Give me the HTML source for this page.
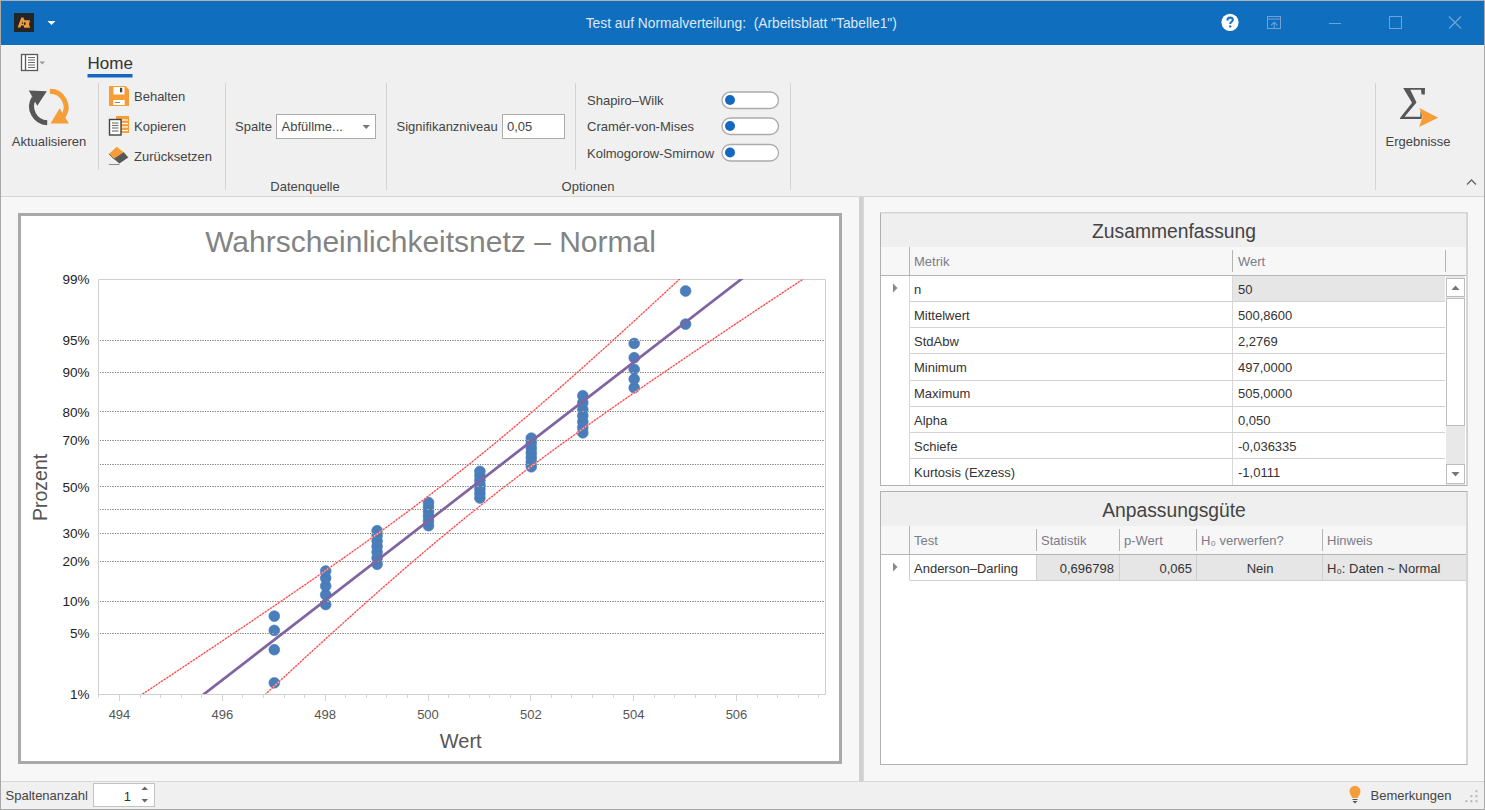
<!DOCTYPE html>
<html><head><meta charset="utf-8"><style>
html,body{margin:0;padding:0;width:1485px;height:810px;overflow:hidden;background:#f7f7f7}
svg{display:block;font-family:"Liberation Sans", sans-serif}
</style></head><body>
<svg width="1485" height="810" viewBox="0 0 1485 810">
<rect x="0" y="0" width="1485" height="810" fill="#f7f7f7" stroke="none" stroke-width="1" />
<rect x="1" y="1" width="1483" height="44" fill="#106ebe" stroke="none" stroke-width="1" />
<rect x="1" y="45" width="1483" height="151" fill="#f0f0f0" stroke="none" stroke-width="1" />
<line x1="1" y1="196.5" x2="1484" y2="196.5" stroke="#d6d6d6" stroke-width="1" />
<line x1="1" y1="781.5" x2="1484" y2="781.5" stroke="#d6d6d6" stroke-width="1" />
<rect x="1" y="782" width="1483" height="27" fill="#f0f0f0" stroke="none" stroke-width="1" />
<line x1="0.5" y1="0" x2="0.5" y2="810" stroke="#a8a8a8" stroke-width="1" />
<line x1="1484.5" y1="0" x2="1484.5" y2="810" stroke="#a8a8a8" stroke-width="1" />
<line x1="0" y1="0.5" x2="1485" y2="0.5" stroke="#b0b0b0" stroke-width="1" />
<line x1="0" y1="809.5" x2="1485" y2="809.5" stroke="#a8a8a8" stroke-width="1" />
<rect x="14" y="13" width="20" height="19" fill="#252525" stroke="none" stroke-width="1" />
<path d="M17.6 27.6 L21.3 17.6 L23.4 17.6 L24.6 20.2 L30 20.2 L29 24 L30 27.8 L24.2 27.8 L23.6 25.6 L21.2 25.6 L20.4 27.6 Z" fill="#f09a38"/>
<path d="M21.8 23.8 L23.2 23.8 L22.6 21.2 Z" fill="#2a2520"/>
<ellipse cx="24.8" cy="23.6" rx="0.9" ry="1.6" fill="#2a2520"/>
<path d="M47.5 21 L55.5 21 L51.5 25 Z" fill="#ffffff"/>
<text x="741.3" y="27.8" font-size="13.8" fill="#dce8f5" text-anchor="middle" font-weight="normal" >Test auf Normalverteilung:&#160;&#160;(Arbeitsblatt "Tabelle1")</text>
<circle cx="1230" cy="22.3" r="8.6" fill="#ffffff"/>
<path d="M1227.4 20.4 C1227.4 18.5 1228.6 17.6 1230.1 17.6 C1231.7 17.6 1232.8 18.6 1232.8 19.9 C1232.8 21.7 1230.2 21.9 1230.2 24" stroke="#1a72c0" stroke-width="2.1" fill="none"/>
<circle cx="1230.2" cy="26.4" r="1.2" fill="#1a72c0"/>
<rect x="1267.5" y="16.5" width="13" height="12" fill="none" stroke="#6fa3d6" stroke-width="1" />
<line x1="1267.5" y1="19" x2="1280.5" y2="19" stroke="#6fa3d6" stroke-width="1" />
<path d="M1274.2 28 L1274.2 22.2 M1271 25.3 L1274.2 22.2 L1277.4 25.3" stroke="#6fa3d6" stroke-width="1.1" fill="none"/>
<line x1="1329" y1="23.5" x2="1341" y2="23.5" stroke="#6fa3d6" stroke-width="1" />
<rect x="1389.5" y="16.5" width="12" height="12" fill="none" stroke="#6fa3d6" stroke-width="1" />
<path d="M1449 16.5 L1461 28.5 M1461 16.5 L1449 28.5" stroke="#6fa3d6" stroke-width="1.2"/>
<rect x="21.5" y="54.5" width="16" height="16" fill="#ffffff" stroke="#595959" stroke-width="1.3" />
<line x1="25.5" y1="55" x2="25.5" y2="70" stroke="#595959" stroke-width="1.3" />
<line x1="28" y1="57.5" x2="35" y2="57.5" stroke="#6a6a6a" stroke-width="1" />
<line x1="28" y1="60" x2="35" y2="60" stroke="#6a6a6a" stroke-width="1" />
<line x1="28" y1="62.5" x2="35" y2="62.5" stroke="#6a6a6a" stroke-width="1" />
<line x1="28" y1="65" x2="35" y2="65" stroke="#6a6a6a" stroke-width="1" />
<line x1="28" y1="67.5" x2="35" y2="67.5" stroke="#6a6a6a" stroke-width="1" />
<path d="M39.5 61.5 L45 61.5 L42.25 64.5 Z" fill="#999"/>
<text x="87.5" y="68.6" font-size="17" fill="#333" text-anchor="start" font-weight="normal" >Home</text>
<rect x="87.5" y="74" width="45" height="3.5" fill="#1467c0" stroke="none" stroke-width="1" />
<path d="M47.2 122.8 A16.3 16.3 0 0 1 34 98" stroke="#575757" stroke-width="5" fill="none"/>
<path d="M28.8 90.5 L46.8 91.2 L37.3 105.8 Z" fill="#575757"/>
<path d="M49.9 91.3 A16 16 0 0 1 63.1 116.5" stroke="#f59d36" stroke-width="5" fill="none"/>
<path d="M50.5 123.4 L68.9 123.4 L59.7 108.2 Z" fill="#f59d36"/>
<text x="49.0" y="146.0" font-size="13" fill="#444" text-anchor="middle" font-weight="normal" >Aktualisieren</text>
<line x1="98.5" y1="83" x2="98.5" y2="170" stroke="#d4d4d4" stroke-width="1" />
<path d="M109 86 L125.5 86 L129 89.5 L129 106 L109 106 Z" fill="#f59d36"/>
<rect x="113.5" y="87" width="11" height="7.5" fill="#ffffff" stroke="none" stroke-width="1" />
<rect x="120" y="87.8" width="2.2" height="4.5" fill="#444" stroke="none" stroke-width="1" />
<rect x="113.3" y="100" width="11.4" height="5" fill="#ffffff" stroke="none" stroke-width="1" />
<line x1="115" y1="102.5" x2="120" y2="102.5" stroke="#888" stroke-width="1" />
<text x="134.0" y="101.0" font-size="13" fill="#444" text-anchor="start" font-weight="normal" >Behalten</text>
<rect x="116" y="116" width="13" height="17" fill="#f59d36" stroke="none" stroke-width="1" />
<line x1="122" y1="120" x2="128" y2="120" stroke="#fff" stroke-width="1.2" />
<line x1="122" y1="123.5" x2="128" y2="123.5" stroke="#fff" stroke-width="1.2" />
<line x1="122" y1="127" x2="128" y2="127" stroke="#fff" stroke-width="1.2" />
<line x1="122" y1="130.5" x2="128" y2="130.5" stroke="#fff" stroke-width="1.2" />
<rect x="109.5" y="119.5" width="11.5" height="15.5" fill="#ffffff" stroke="#444" stroke-width="1.4" />
<line x1="112" y1="123" x2="118.5" y2="123" stroke="#777" stroke-width="1.2" />
<line x1="112" y1="125.5" x2="118.5" y2="125.5" stroke="#777" stroke-width="1.2" />
<line x1="112" y1="128" x2="118.5" y2="128" stroke="#777" stroke-width="1.2" />
<line x1="112" y1="131" x2="118.5" y2="131" stroke="#777" stroke-width="1.2" />
<text x="134.0" y="131.0" font-size="13" fill="#444" text-anchor="start" font-weight="normal" >Kopieren</text>
<path d="M116.7 146.7 L108.9 154 L114 159 L124 152.5 Z" fill="#f59d36"/>
<path d="M114 159 L119.4 163.5 L128.3 157.5 L124 152.5 Z" fill="#575757"/>
<path d="M108.9 154 L114 159 L124 152.5" fill="none" stroke="#575757" stroke-width="0.8"/>
<line x1="109" y1="164.5" x2="119.5" y2="164.5" stroke="#888" stroke-width="1" />
<text x="134.0" y="161.0" font-size="13" fill="#444" text-anchor="start" font-weight="normal" >Zurücksetzen</text>
<line x1="225.5" y1="83" x2="225.5" y2="190" stroke="#d4d4d4" stroke-width="1" />
<text x="235.0" y="131.0" font-size="13" fill="#444" text-anchor="start" font-weight="normal" >Spalte</text>
<rect x="276.5" y="114.5" width="99" height="24" fill="#ffffff" stroke="#ababab" stroke-width="1" />
<text x="281.5" y="131.0" font-size="13" fill="#444" text-anchor="start" font-weight="normal" >Abfüllme...</text>
<path d="M362.5 125 L370 125 L366.25 129 Z" fill="#777"/>
<text x="305.0" y="191.0" font-size="13" fill="#444" text-anchor="middle" font-weight="normal" >Datenquelle</text>
<line x1="386.5" y1="83" x2="386.5" y2="190" stroke="#d4d4d4" stroke-width="1" />
<text x="396.5" y="131.0" font-size="13" fill="#444" text-anchor="start" font-weight="normal" >Signifikanzniveau</text>
<rect x="502.5" y="114.5" width="62" height="24" fill="#ffffff" stroke="#ababab" stroke-width="1" />
<text x="507.0" y="131.0" font-size="13" fill="#444" text-anchor="start" font-weight="normal" >0,05</text>
<line x1="575.5" y1="83" x2="575.5" y2="170" stroke="#d4d4d4" stroke-width="1" />
<text x="587.0" y="105.0" font-size="13" fill="#444" text-anchor="start" font-weight="normal" >Shapiro–Wilk</text>
<rect x="722" y="92.0" width="56.5" height="16.5" fill="#ffffff" stroke="#ababab" stroke-width="1.3" rx="8.25"/>
<circle cx="730" cy="100.0" r="5" fill="#1468c2"/>
<text x="587.0" y="131.0" font-size="13" fill="#444" text-anchor="start" font-weight="normal" >Cramér-von-Mises</text>
<rect x="722" y="118.0" width="56.5" height="16.5" fill="#ffffff" stroke="#ababab" stroke-width="1.3" rx="8.25"/>
<circle cx="730" cy="126.0" r="5" fill="#1468c2"/>
<text x="587.0" y="157.5" font-size="13" fill="#444" text-anchor="start" font-weight="normal" >Kolmogorow-Smirnow</text>
<rect x="722" y="144.5" width="56.5" height="16.5" fill="#ffffff" stroke="#ababab" stroke-width="1.3" rx="8.25"/>
<circle cx="730" cy="152.5" r="5" fill="#1468c2"/>
<text x="588.0" y="191.0" font-size="13" fill="#444" text-anchor="middle" font-weight="normal" >Optionen</text>
<line x1="790.5" y1="83" x2="790.5" y2="190" stroke="#d4d4d4" stroke-width="1" />
<line x1="1375.5" y1="83" x2="1375.5" y2="190" stroke="#d4d4d4" stroke-width="1" />
<path d="M1403.2 88 L1425 88 L1424.8 94.6 L1421.6 94.6 L1421 89.8 L1410.3 89.8 L1416.5 102.5 L1404.6 116.8 L1420.3 116.8 L1420.6 111.6 L1421.9 111.6 L1421.6 119 L1400 119 L1400 118 L1412 102.8 Z" fill="#575757"/>
<path d="M1419.4 107.9 L1438.2 117.8 L1419.1 127 L1422.5 117.2 Z" fill="#f59d36"/>
<text x="1418.0" y="146.0" font-size="13" fill="#444" text-anchor="middle" font-weight="normal" >Ergebnisse</text>
<path d="M1467 184.5 L1471.5 180 L1476 184.5" stroke="#666" stroke-width="1.3" fill="none"/>
<rect x="19.5" y="214.5" width="821" height="548" fill="#ffffff" stroke="#a9a9a9" stroke-width="3" />
<text x="430.5" y="252.0" font-size="30" fill="#838383" text-anchor="middle" font-weight="normal" >Wahrscheinlichkeitsnetz – Normal</text>
<path d="M98.5 694.0 L98.5 279.5 L825.5 279.5 L825.5 694.0" fill="none" stroke="#d0d0d0"/>
<line x1="98" y1="694.5" x2="826.0" y2="694.5" stroke="#d0d0d0" stroke-width="1" />
<line x1="98.5" y1="695" x2="98.5" y2="698" stroke="#d4d4d4" stroke-width="1" />
<line x1="119.5" y1="695" x2="119.5" y2="701" stroke="#d4d4d4" stroke-width="1" />
<line x1="140.5" y1="695" x2="140.5" y2="698" stroke="#d4d4d4" stroke-width="1" />
<line x1="160.5" y1="695" x2="160.5" y2="698" stroke="#d4d4d4" stroke-width="1" />
<line x1="181.5" y1="695" x2="181.5" y2="698" stroke="#d4d4d4" stroke-width="1" />
<line x1="201.5" y1="695" x2="201.5" y2="698" stroke="#d4d4d4" stroke-width="1" />
<line x1="222.5" y1="695" x2="222.5" y2="701" stroke="#d4d4d4" stroke-width="1" />
<line x1="242.5" y1="695" x2="242.5" y2="698" stroke="#d4d4d4" stroke-width="1" />
<line x1="263.5" y1="695" x2="263.5" y2="698" stroke="#d4d4d4" stroke-width="1" />
<line x1="284.5" y1="695" x2="284.5" y2="698" stroke="#d4d4d4" stroke-width="1" />
<line x1="304.5" y1="695" x2="304.5" y2="698" stroke="#d4d4d4" stroke-width="1" />
<line x1="325.5" y1="695" x2="325.5" y2="701" stroke="#d4d4d4" stroke-width="1" />
<line x1="345.5" y1="695" x2="345.5" y2="698" stroke="#d4d4d4" stroke-width="1" />
<line x1="366.5" y1="695" x2="366.5" y2="698" stroke="#d4d4d4" stroke-width="1" />
<line x1="386.5" y1="695" x2="386.5" y2="698" stroke="#d4d4d4" stroke-width="1" />
<line x1="407.5" y1="695" x2="407.5" y2="698" stroke="#d4d4d4" stroke-width="1" />
<line x1="428.5" y1="695" x2="428.5" y2="701" stroke="#d4d4d4" stroke-width="1" />
<line x1="448.5" y1="695" x2="448.5" y2="698" stroke="#d4d4d4" stroke-width="1" />
<line x1="469.5" y1="695" x2="469.5" y2="698" stroke="#d4d4d4" stroke-width="1" />
<line x1="489.5" y1="695" x2="489.5" y2="698" stroke="#d4d4d4" stroke-width="1" />
<line x1="510.5" y1="695" x2="510.5" y2="698" stroke="#d4d4d4" stroke-width="1" />
<line x1="530.5" y1="695" x2="530.5" y2="701" stroke="#d4d4d4" stroke-width="1" />
<line x1="551.5" y1="695" x2="551.5" y2="698" stroke="#d4d4d4" stroke-width="1" />
<line x1="571.5" y1="695" x2="571.5" y2="698" stroke="#d4d4d4" stroke-width="1" />
<line x1="592.5" y1="695" x2="592.5" y2="698" stroke="#d4d4d4" stroke-width="1" />
<line x1="613.5" y1="695" x2="613.5" y2="698" stroke="#d4d4d4" stroke-width="1" />
<line x1="633.5" y1="695" x2="633.5" y2="701" stroke="#d4d4d4" stroke-width="1" />
<line x1="654.5" y1="695" x2="654.5" y2="698" stroke="#d4d4d4" stroke-width="1" />
<line x1="674.5" y1="695" x2="674.5" y2="698" stroke="#d4d4d4" stroke-width="1" />
<line x1="695.5" y1="695" x2="695.5" y2="698" stroke="#d4d4d4" stroke-width="1" />
<line x1="715.5" y1="695" x2="715.5" y2="698" stroke="#d4d4d4" stroke-width="1" />
<line x1="736.5" y1="695" x2="736.5" y2="701" stroke="#d4d4d4" stroke-width="1" />
<line x1="757.5" y1="695" x2="757.5" y2="698" stroke="#d4d4d4" stroke-width="1" />
<line x1="777.5" y1="695" x2="777.5" y2="698" stroke="#d4d4d4" stroke-width="1" />
<line x1="798.5" y1="695" x2="798.5" y2="698" stroke="#d4d4d4" stroke-width="1" />
<line x1="818.5" y1="695" x2="818.5" y2="698" stroke="#d4d4d4" stroke-width="1" />
<text x="119.5" y="719.0" font-size="13" fill="#555" text-anchor="middle" font-weight="normal" >494</text>
<text x="222.3" y="719.0" font-size="13" fill="#555" text-anchor="middle" font-weight="normal" >496</text>
<text x="325.2" y="719.0" font-size="13" fill="#555" text-anchor="middle" font-weight="normal" >498</text>
<text x="428.0" y="719.0" font-size="13" fill="#555" text-anchor="middle" font-weight="normal" >500</text>
<text x="530.8" y="719.0" font-size="13" fill="#555" text-anchor="middle" font-weight="normal" >502</text>
<text x="633.7" y="719.0" font-size="13" fill="#555" text-anchor="middle" font-weight="normal" >504</text>
<text x="736.5" y="719.0" font-size="13" fill="#555" text-anchor="middle" font-weight="normal" >506</text>
<text x="89.5" y="284.3" font-size="13.5" fill="#222" text-anchor="end" font-weight="normal" >99%</text>
<text x="89.5" y="345.0" font-size="13.5" fill="#222" text-anchor="end" font-weight="normal" >95%</text>
<text x="89.5" y="377.4" font-size="13.5" fill="#222" text-anchor="end" font-weight="normal" >90%</text>
<text x="89.5" y="416.6" font-size="13.5" fill="#222" text-anchor="end" font-weight="normal" >80%</text>
<text x="89.5" y="444.8" font-size="13.5" fill="#222" text-anchor="end" font-weight="normal" >70%</text>
<text x="89.5" y="491.5" font-size="13.5" fill="#222" text-anchor="end" font-weight="normal" >50%</text>
<text x="89.5" y="538.2" font-size="13.5" fill="#222" text-anchor="end" font-weight="normal" >30%</text>
<text x="89.5" y="566.4" font-size="13.5" fill="#222" text-anchor="end" font-weight="normal" >20%</text>
<text x="89.5" y="605.6" font-size="13.5" fill="#222" text-anchor="end" font-weight="normal" >10%</text>
<text x="89.5" y="638.0" font-size="13.5" fill="#222" text-anchor="end" font-weight="normal" >5%</text>
<text x="89.5" y="698.7" font-size="13.5" fill="#222" text-anchor="end" font-weight="normal" >1%</text>
<text x="460.7" y="747.5" font-size="20" fill="#555" text-anchor="middle" font-weight="normal" >Wert</text>
<text x="0.0" y="0.0" font-size="19.5" fill="#555" text-anchor="middle" font-weight="normal" transform="translate(46.8 487.4) rotate(-90)">Prozent</text>
<clipPath id="pc"><rect x="99" y="279.0" width="726.0" height="415.0"/></clipPath>
<circle cx="274.3" cy="682.8" r="5.4" fill="#4a7ebb" stroke="#4577b3" stroke-width="0.6"/>
<circle cx="274.3" cy="649.7" r="5.4" fill="#4a7ebb" stroke="#4577b3" stroke-width="0.6"/>
<circle cx="274.3" cy="630.4" r="5.4" fill="#4a7ebb" stroke="#4577b3" stroke-width="0.6"/>
<circle cx="274.3" cy="616.1" r="5.4" fill="#4a7ebb" stroke="#4577b3" stroke-width="0.6"/>
<circle cx="325.7" cy="604.5" r="5.4" fill="#4a7ebb" stroke="#4577b3" stroke-width="0.6"/>
<circle cx="325.7" cy="594.7" r="5.4" fill="#4a7ebb" stroke="#4577b3" stroke-width="0.6"/>
<circle cx="325.7" cy="586.0" r="5.4" fill="#4a7ebb" stroke="#4577b3" stroke-width="0.6"/>
<circle cx="325.7" cy="578.1" r="5.4" fill="#4a7ebb" stroke="#4577b3" stroke-width="0.6"/>
<circle cx="325.7" cy="571.0" r="5.4" fill="#4a7ebb" stroke="#4577b3" stroke-width="0.6"/>
<circle cx="377.1" cy="564.3" r="5.4" fill="#4a7ebb" stroke="#4577b3" stroke-width="0.6"/>
<circle cx="377.1" cy="558.0" r="5.4" fill="#4a7ebb" stroke="#4577b3" stroke-width="0.6"/>
<circle cx="377.1" cy="552.1" r="5.4" fill="#4a7ebb" stroke="#4577b3" stroke-width="0.6"/>
<circle cx="377.1" cy="546.4" r="5.4" fill="#4a7ebb" stroke="#4577b3" stroke-width="0.6"/>
<circle cx="377.1" cy="541.0" r="5.4" fill="#4a7ebb" stroke="#4577b3" stroke-width="0.6"/>
<circle cx="377.1" cy="535.7" r="5.4" fill="#4a7ebb" stroke="#4577b3" stroke-width="0.6"/>
<circle cx="377.1" cy="530.7" r="5.4" fill="#4a7ebb" stroke="#4577b3" stroke-width="0.6"/>
<circle cx="428.5" cy="525.7" r="5.4" fill="#4a7ebb" stroke="#4577b3" stroke-width="0.6"/>
<circle cx="428.5" cy="520.9" r="5.4" fill="#4a7ebb" stroke="#4577b3" stroke-width="0.6"/>
<circle cx="428.5" cy="516.2" r="5.4" fill="#4a7ebb" stroke="#4577b3" stroke-width="0.6"/>
<circle cx="428.5" cy="511.6" r="5.4" fill="#4a7ebb" stroke="#4577b3" stroke-width="0.6"/>
<circle cx="428.5" cy="507.0" r="5.4" fill="#4a7ebb" stroke="#4577b3" stroke-width="0.6"/>
<circle cx="428.5" cy="502.5" r="5.4" fill="#4a7ebb" stroke="#4577b3" stroke-width="0.6"/>
<circle cx="479.9" cy="498.0" r="5.4" fill="#4a7ebb" stroke="#4577b3" stroke-width="0.6"/>
<circle cx="479.9" cy="493.5" r="5.4" fill="#4a7ebb" stroke="#4577b3" stroke-width="0.6"/>
<circle cx="479.9" cy="489.1" r="5.4" fill="#4a7ebb" stroke="#4577b3" stroke-width="0.6"/>
<circle cx="479.9" cy="484.7" r="5.4" fill="#4a7ebb" stroke="#4577b3" stroke-width="0.6"/>
<circle cx="479.9" cy="480.3" r="5.4" fill="#4a7ebb" stroke="#4577b3" stroke-width="0.6"/>
<circle cx="479.9" cy="475.8" r="5.4" fill="#4a7ebb" stroke="#4577b3" stroke-width="0.6"/>
<circle cx="479.9" cy="471.3" r="5.4" fill="#4a7ebb" stroke="#4577b3" stroke-width="0.6"/>
<circle cx="531.3" cy="466.8" r="5.4" fill="#4a7ebb" stroke="#4577b3" stroke-width="0.6"/>
<circle cx="531.3" cy="462.2" r="5.4" fill="#4a7ebb" stroke="#4577b3" stroke-width="0.6"/>
<circle cx="531.3" cy="457.6" r="5.4" fill="#4a7ebb" stroke="#4577b3" stroke-width="0.6"/>
<circle cx="531.3" cy="452.9" r="5.4" fill="#4a7ebb" stroke="#4577b3" stroke-width="0.6"/>
<circle cx="531.3" cy="448.1" r="5.4" fill="#4a7ebb" stroke="#4577b3" stroke-width="0.6"/>
<circle cx="531.3" cy="443.1" r="5.4" fill="#4a7ebb" stroke="#4577b3" stroke-width="0.6"/>
<circle cx="531.3" cy="438.1" r="5.4" fill="#4a7ebb" stroke="#4577b3" stroke-width="0.6"/>
<circle cx="582.8" cy="432.8" r="5.4" fill="#4a7ebb" stroke="#4577b3" stroke-width="0.6"/>
<circle cx="582.8" cy="427.4" r="5.4" fill="#4a7ebb" stroke="#4577b3" stroke-width="0.6"/>
<circle cx="582.8" cy="421.7" r="5.4" fill="#4a7ebb" stroke="#4577b3" stroke-width="0.6"/>
<circle cx="582.8" cy="415.8" r="5.4" fill="#4a7ebb" stroke="#4577b3" stroke-width="0.6"/>
<circle cx="582.8" cy="409.5" r="5.4" fill="#4a7ebb" stroke="#4577b3" stroke-width="0.6"/>
<circle cx="582.8" cy="402.8" r="5.4" fill="#4a7ebb" stroke="#4577b3" stroke-width="0.6"/>
<circle cx="582.8" cy="395.7" r="5.4" fill="#4a7ebb" stroke="#4577b3" stroke-width="0.6"/>
<circle cx="634.2" cy="387.8" r="5.4" fill="#4a7ebb" stroke="#4577b3" stroke-width="0.6"/>
<circle cx="634.2" cy="379.1" r="5.4" fill="#4a7ebb" stroke="#4577b3" stroke-width="0.6"/>
<circle cx="634.2" cy="369.3" r="5.4" fill="#4a7ebb" stroke="#4577b3" stroke-width="0.6"/>
<circle cx="634.2" cy="357.7" r="5.4" fill="#4a7ebb" stroke="#4577b3" stroke-width="0.6"/>
<circle cx="634.2" cy="343.4" r="5.4" fill="#4a7ebb" stroke="#4577b3" stroke-width="0.6"/>
<circle cx="685.6" cy="324.1" r="5.4" fill="#4a7ebb" stroke="#4577b3" stroke-width="0.6"/>
<circle cx="685.6" cy="291.0" r="5.4" fill="#4a7ebb" stroke="#4577b3" stroke-width="0.6"/>
<line x1="100" y1="340.5" x2="824.0" y2="340.5" stroke="#7a7a7a" stroke-width="1" stroke-dasharray="1 4"/>
<line x1="100" y1="340.5" x2="824.0" y2="340.5" stroke="#a2a2a2" stroke-width="1" stroke-dasharray="0 2 2 1"/>
<line x1="100" y1="372.5" x2="824.0" y2="372.5" stroke="#7a7a7a" stroke-width="1" stroke-dasharray="1 4"/>
<line x1="100" y1="372.5" x2="824.0" y2="372.5" stroke="#a2a2a2" stroke-width="1" stroke-dasharray="0 2 2 1"/>
<line x1="100" y1="411.5" x2="824.0" y2="411.5" stroke="#7a7a7a" stroke-width="1" stroke-dasharray="1 4"/>
<line x1="100" y1="411.5" x2="824.0" y2="411.5" stroke="#a2a2a2" stroke-width="1" stroke-dasharray="0 2 2 1"/>
<line x1="100" y1="440.5" x2="824.0" y2="440.5" stroke="#7a7a7a" stroke-width="1" stroke-dasharray="1 4"/>
<line x1="100" y1="440.5" x2="824.0" y2="440.5" stroke="#a2a2a2" stroke-width="1" stroke-dasharray="0 2 2 1"/>
<line x1="100" y1="464.5" x2="824.0" y2="464.5" stroke="#7a7a7a" stroke-width="1" stroke-dasharray="1 4"/>
<line x1="100" y1="464.5" x2="824.0" y2="464.5" stroke="#a2a2a2" stroke-width="1" stroke-dasharray="0 2 2 1"/>
<line x1="100" y1="486.5" x2="824.0" y2="486.5" stroke="#7a7a7a" stroke-width="1" stroke-dasharray="1 4"/>
<line x1="100" y1="486.5" x2="824.0" y2="486.5" stroke="#a2a2a2" stroke-width="1" stroke-dasharray="0 2 2 1"/>
<line x1="100" y1="509.5" x2="824.0" y2="509.5" stroke="#7a7a7a" stroke-width="1" stroke-dasharray="1 4"/>
<line x1="100" y1="509.5" x2="824.0" y2="509.5" stroke="#a2a2a2" stroke-width="1" stroke-dasharray="0 2 2 1"/>
<line x1="100" y1="533.5" x2="824.0" y2="533.5" stroke="#7a7a7a" stroke-width="1" stroke-dasharray="1 4"/>
<line x1="100" y1="533.5" x2="824.0" y2="533.5" stroke="#a2a2a2" stroke-width="1" stroke-dasharray="0 2 2 1"/>
<line x1="100" y1="561.5" x2="824.0" y2="561.5" stroke="#7a7a7a" stroke-width="1" stroke-dasharray="1 4"/>
<line x1="100" y1="561.5" x2="824.0" y2="561.5" stroke="#a2a2a2" stroke-width="1" stroke-dasharray="0 2 2 1"/>
<line x1="100" y1="601.5" x2="824.0" y2="601.5" stroke="#7a7a7a" stroke-width="1" stroke-dasharray="1 4"/>
<line x1="100" y1="601.5" x2="824.0" y2="601.5" stroke="#a2a2a2" stroke-width="1" stroke-dasharray="0 2 2 1"/>
<line x1="100" y1="633.5" x2="824.0" y2="633.5" stroke="#7a7a7a" stroke-width="1" stroke-dasharray="1 4"/>
<line x1="100" y1="633.5" x2="824.0" y2="633.5" stroke="#a2a2a2" stroke-width="1" stroke-dasharray="0 2 2 1"/>
<g clip-path="url(#pc)">
<polyline points="78.48,736.24 85.25,731.79 92.02,727.34 98.79,722.88 105.55,718.43 112.31,713.98 119.06,709.53 125.81,705.07 132.55,700.62 139.28,696.17 146.02,691.72 152.74,687.26 159.46,682.81 166.18,678.36 172.88,673.91 179.58,669.45 186.27,665.00 192.96,660.55 199.64,656.10 206.30,651.64 212.96,647.19 219.61,642.74 226.25,638.29 232.88,633.83 239.50,629.38 246.11,624.93 252.70,620.48 259.28,616.02 265.85,611.57 272.41,607.12 278.94,602.67 285.47,598.21 291.97,593.76 298.46,589.31 304.93,584.86 311.38,580.40 317.81,575.95 324.22,571.50 330.60,567.05 336.96,562.59 343.29,558.14 349.60,553.69 355.88,549.24 362.14,544.78 368.36,540.33 374.55,535.88 380.71,531.43 386.83,526.97 392.92,522.52 398.98,518.07 405.00,513.62 410.98,509.16 416.92,504.71 422.83,500.26 428.69,495.81 434.52,491.35 440.30,486.90 446.05,482.45 451.75,478.00 457.42,473.54 463.04,469.09 468.63,464.64 474.18,460.19 479.69,455.73 485.16,451.28 490.60,446.83 496.01,442.38 501.38,437.92 506.72,433.47 512.03,429.02 517.30,424.57 522.55,420.11 527.77,415.66 532.97,411.21 538.14,406.76 543.29,402.30 548.41,397.85 553.51,393.40 558.59,388.95 563.65,384.49 568.69,380.04 573.72,375.59 578.72,371.14 583.72,366.68 588.69,362.23 593.65,357.78 598.60,353.33 603.54,348.87 608.46,344.42 613.37,339.97 618.27,335.51 623.16,331.06 628.04,326.61 632.91,322.16 637.78,317.71 642.63,313.25 647.47,308.80 652.31,304.35 657.14,299.89 661.97,295.44 666.78,290.99 671.59,286.54 676.40,282.09 681.19,277.63 685.99,273.18 690.78,268.73 695.56,264.28 700.34,259.82 705.11,255.37 709.88,250.92 714.64,246.47 719.40,242.01 724.16,237.56" fill="none" stroke="#ffb4b4" stroke-width="1.3"/>
<polyline points="78.48,736.24 85.25,731.79 92.02,727.34 98.79,722.88 105.55,718.43 112.31,713.98 119.06,709.53 125.81,705.07 132.55,700.62 139.28,696.17 146.02,691.72 152.74,687.26 159.46,682.81 166.18,678.36 172.88,673.91 179.58,669.45 186.27,665.00 192.96,660.55 199.64,656.10 206.30,651.64 212.96,647.19 219.61,642.74 226.25,638.29 232.88,633.83 239.50,629.38 246.11,624.93 252.70,620.48 259.28,616.02 265.85,611.57 272.41,607.12 278.94,602.67 285.47,598.21 291.97,593.76 298.46,589.31 304.93,584.86 311.38,580.40 317.81,575.95 324.22,571.50 330.60,567.05 336.96,562.59 343.29,558.14 349.60,553.69 355.88,549.24 362.14,544.78 368.36,540.33 374.55,535.88 380.71,531.43 386.83,526.97 392.92,522.52 398.98,518.07 405.00,513.62 410.98,509.16 416.92,504.71 422.83,500.26 428.69,495.81 434.52,491.35 440.30,486.90 446.05,482.45 451.75,478.00 457.42,473.54 463.04,469.09 468.63,464.64 474.18,460.19 479.69,455.73 485.16,451.28 490.60,446.83 496.01,442.38 501.38,437.92 506.72,433.47 512.03,429.02 517.30,424.57 522.55,420.11 527.77,415.66 532.97,411.21 538.14,406.76 543.29,402.30 548.41,397.85 553.51,393.40 558.59,388.95 563.65,384.49 568.69,380.04 573.72,375.59 578.72,371.14 583.72,366.68 588.69,362.23 593.65,357.78 598.60,353.33 603.54,348.87 608.46,344.42 613.37,339.97 618.27,335.51 623.16,331.06 628.04,326.61 632.91,322.16 637.78,317.71 642.63,313.25 647.47,308.80 652.31,304.35 657.14,299.89 661.97,295.44 666.78,290.99 671.59,286.54 676.40,282.09 681.19,277.63 685.99,273.18 690.78,268.73 695.56,264.28 700.34,259.82 705.11,255.37 709.88,250.92 714.64,246.47 719.40,242.01 724.16,237.56" fill="none" stroke="#ff3a3a" stroke-width="1.2" stroke-dasharray="1.6 1.6"/>
<polyline points="220.44,736.24 225.20,731.79 229.96,727.34 234.72,722.88 239.49,718.43 244.26,713.98 249.04,709.53 253.82,705.07 258.61,700.62 263.41,696.17 268.20,691.72 273.01,687.26 277.82,682.81 282.63,678.36 287.46,673.91 292.29,669.45 297.13,665.00 301.97,660.55 306.82,656.10 311.69,651.64 316.56,647.19 321.44,642.74 326.33,638.29 331.23,633.83 336.14,629.38 341.06,624.93 346.00,620.48 350.95,616.02 355.91,611.57 360.88,607.12 365.88,602.67 370.88,598.21 375.91,593.76 380.95,589.31 386.01,584.86 391.09,580.40 396.19,575.95 401.31,571.50 406.46,567.05 411.63,562.59 416.83,558.14 422.05,553.69 427.30,549.24 432.57,544.78 437.88,540.33 443.22,535.88 448.59,531.43 454.00,526.97 459.44,522.52 464.91,518.07 470.42,513.62 475.97,509.16 481.56,504.71 487.18,500.26 492.85,495.81 498.55,491.35 504.30,486.90 510.08,482.45 515.91,478.00 521.77,473.54 527.68,469.09 533.62,464.64 539.60,460.19 545.62,455.73 551.68,451.28 557.77,446.83 563.89,442.38 570.05,437.92 576.24,433.47 582.46,429.02 588.72,424.57 595.00,420.11 601.31,415.66 607.64,411.21 614.00,406.76 620.38,402.30 626.79,397.85 633.22,393.40 639.67,388.95 646.14,384.49 652.63,380.04 659.13,375.59 665.66,371.14 672.19,366.68 678.75,362.23 685.32,357.78 691.90,353.33 698.49,348.87 705.10,344.42 711.72,339.97 718.35,335.51 724.99,331.06 731.64,326.61 738.30,322.16 744.96,317.71 751.64,313.25 758.33,308.80 765.02,304.35 771.72,299.89 778.42,295.44 785.14,290.99 791.86,286.54 798.58,282.09 805.32,277.63 812.05,273.18 818.79,268.73 825.54,264.28 832.29,259.82 839.05,255.37 845.81,250.92 852.58,246.47 859.35,242.01 866.12,237.56" fill="none" stroke="#ffb4b4" stroke-width="1.3"/>
<polyline points="220.44,736.24 225.20,731.79 229.96,727.34 234.72,722.88 239.49,718.43 244.26,713.98 249.04,709.53 253.82,705.07 258.61,700.62 263.41,696.17 268.20,691.72 273.01,687.26 277.82,682.81 282.63,678.36 287.46,673.91 292.29,669.45 297.13,665.00 301.97,660.55 306.82,656.10 311.69,651.64 316.56,647.19 321.44,642.74 326.33,638.29 331.23,633.83 336.14,629.38 341.06,624.93 346.00,620.48 350.95,616.02 355.91,611.57 360.88,607.12 365.88,602.67 370.88,598.21 375.91,593.76 380.95,589.31 386.01,584.86 391.09,580.40 396.19,575.95 401.31,571.50 406.46,567.05 411.63,562.59 416.83,558.14 422.05,553.69 427.30,549.24 432.57,544.78 437.88,540.33 443.22,535.88 448.59,531.43 454.00,526.97 459.44,522.52 464.91,518.07 470.42,513.62 475.97,509.16 481.56,504.71 487.18,500.26 492.85,495.81 498.55,491.35 504.30,486.90 510.08,482.45 515.91,478.00 521.77,473.54 527.68,469.09 533.62,464.64 539.60,460.19 545.62,455.73 551.68,451.28 557.77,446.83 563.89,442.38 570.05,437.92 576.24,433.47 582.46,429.02 588.72,424.57 595.00,420.11 601.31,415.66 607.64,411.21 614.00,406.76 620.38,402.30 626.79,397.85 633.22,393.40 639.67,388.95 646.14,384.49 652.63,380.04 659.13,375.59 665.66,371.14 672.19,366.68 678.75,362.23 685.32,357.78 691.90,353.33 698.49,348.87 705.10,344.42 711.72,339.97 718.35,335.51 724.99,331.06 731.64,326.61 738.30,322.16 744.96,317.71 751.64,313.25 758.33,308.80 765.02,304.35 771.72,299.89 778.42,295.44 785.14,290.99 791.86,286.54 798.58,282.09 805.32,277.63 812.05,273.18 818.79,268.73 825.54,264.28 832.29,259.82 839.05,255.37 845.81,250.92 852.58,246.47 859.35,242.01 866.12,237.56" fill="none" stroke="#ff3a3a" stroke-width="1.2" stroke-dasharray="1.6 1.6"/>
<line x1="126.40" y1="754.05" x2="818.20" y2="219.75" stroke="#8064a2" stroke-width="2.7" />
</g>
<rect x="859" y="197" width="4" height="584" fill="#d0d0d0" stroke="none" stroke-width="1" />
<rect x="863" y="197" width="1" height="584" fill="#dadada" stroke="none" stroke-width="1" />
<rect x="880.5" y="213.0" width="586.5" height="272.5" fill="#ffffff" stroke="#b0b0b0" stroke-width="1" />
<rect x="881" y="213.5" width="585" height="33.5" fill="#efefef" stroke="none" stroke-width="1" />
<text x="1174.0" y="238.0" font-size="19.3" fill="#444" text-anchor="middle" font-weight="normal" >Zusammenfassung</text>
<rect x="881" y="247" width="585" height="28" fill="#f7f7f7" stroke="none" stroke-width="1" />
<line x1="881" y1="275.5" x2="1466" y2="275.5" stroke="#b5b5b5" stroke-width="1" />
<line x1="909.5" y1="247" x2="909.5" y2="275" stroke="#b4b4b4" stroke-width="1" />
<line x1="909.5" y1="276" x2="909.5" y2="485" stroke="#d8d8d8" stroke-width="1" />
<line x1="1232.5" y1="250" x2="1232.5" y2="272" stroke="#b4b4b4" stroke-width="1" />
<line x1="1232.5" y1="276" x2="1232.5" y2="485" stroke="#d8d8d8" stroke-width="1" />
<line x1="1445.5" y1="250" x2="1445.5" y2="272" stroke="#b4b4b4" stroke-width="1" />
<text x="914.0" y="266.0" font-size="13" fill="#7b7b8a" text-anchor="start" font-weight="normal" >Metrik</text>
<text x="1238.0" y="266.0" font-size="13" fill="#7b7b8a" text-anchor="start" font-weight="normal" >Wert</text>
<rect x="1233" y="276" width="212" height="25.5" fill="#e6e6e6" stroke="none" stroke-width="1" />
<text x="914.0" y="293.5" font-size="13" fill="#333" text-anchor="start" font-weight="normal" >n</text>
<text x="1238.0" y="293.5" font-size="13" fill="#333" text-anchor="start" font-weight="normal" >50</text>
<line x1="910" y1="301.5" x2="1445" y2="301.5" stroke="#d2d2d2" stroke-width="1" />
<text x="914.0" y="319.7" font-size="13" fill="#333" text-anchor="start" font-weight="normal" >Mittelwert</text>
<text x="1238.0" y="319.7" font-size="13" fill="#333" text-anchor="start" font-weight="normal" >500,8600</text>
<line x1="910" y1="327.5" x2="1445" y2="327.5" stroke="#d2d2d2" stroke-width="1" />
<text x="914.0" y="345.9" font-size="13" fill="#333" text-anchor="start" font-weight="normal" >StdAbw</text>
<text x="1238.0" y="345.9" font-size="13" fill="#333" text-anchor="start" font-weight="normal" >2,2769</text>
<line x1="910" y1="353.5" x2="1445" y2="353.5" stroke="#d2d2d2" stroke-width="1" />
<text x="914.0" y="372.1" font-size="13" fill="#333" text-anchor="start" font-weight="normal" >Minimum</text>
<text x="1238.0" y="372.1" font-size="13" fill="#333" text-anchor="start" font-weight="normal" >497,0000</text>
<line x1="910" y1="380.5" x2="1445" y2="380.5" stroke="#d2d2d2" stroke-width="1" />
<text x="914.0" y="398.3" font-size="13" fill="#333" text-anchor="start" font-weight="normal" >Maximum</text>
<text x="1238.0" y="398.3" font-size="13" fill="#333" text-anchor="start" font-weight="normal" >505,0000</text>
<line x1="910" y1="406.5" x2="1445" y2="406.5" stroke="#d2d2d2" stroke-width="1" />
<text x="914.0" y="424.5" font-size="13" fill="#333" text-anchor="start" font-weight="normal" >Alpha</text>
<text x="1238.0" y="424.5" font-size="13" fill="#333" text-anchor="start" font-weight="normal" >0,050</text>
<line x1="910" y1="432.5" x2="1445" y2="432.5" stroke="#d2d2d2" stroke-width="1" />
<text x="914.0" y="450.7" font-size="13" fill="#333" text-anchor="start" font-weight="normal" >Schiefe</text>
<text x="1238.0" y="450.7" font-size="13" fill="#333" text-anchor="start" font-weight="normal" >-0,036335</text>
<line x1="910" y1="458.5" x2="1445" y2="458.5" stroke="#d2d2d2" stroke-width="1" />
<text x="914.0" y="476.9" font-size="13" fill="#333" text-anchor="start" font-weight="normal" >Kurtosis (Exzess)</text>
<text x="1238.0" y="476.9" font-size="13" fill="#333" text-anchor="start" font-weight="normal" >-1,0111</text>
<path d="M893 283.5 L897.5 288 L893 292.5 Z" fill="#888"/>
<rect x="1446" y="276" width="19" height="209" fill="#e8e8e8" stroke="none" stroke-width="1" />
<rect x="1446.5" y="278.5" width="18" height="18" fill="#ffffff" stroke="#bdbdbd" stroke-width="1" />
<path d="M1451.5 290 L1459.5 290 L1455.5 285.5 Z" fill="#777"/>
<rect x="1446.5" y="298.5" width="18" height="127" fill="#ffffff" stroke="#bdbdbd" stroke-width="1" />
<rect x="1446.5" y="464.5" width="18" height="19" fill="#ffffff" stroke="#bdbdbd" stroke-width="1" />
<path d="M1451.5 472 L1459.5 472 L1455.5 476.5 Z" fill="#777"/>
<rect x="880.5" y="491.5" width="586.5" height="273" fill="#ffffff" stroke="#b0b0b0" stroke-width="1" />
<rect x="881" y="492" width="585" height="34" fill="#efefef" stroke="none" stroke-width="1" />
<text x="1174.0" y="516.5" font-size="19.3" fill="#444" text-anchor="middle" font-weight="normal" >Anpassungsgüte</text>
<rect x="881" y="526" width="585" height="28" fill="#f7f7f7" stroke="none" stroke-width="1" />
<line x1="881" y1="554.5" x2="1466" y2="554.5" stroke="#b5b5b5" stroke-width="1" />
<line x1="909.5" y1="526" x2="909.5" y2="554" stroke="#b4b4b4" stroke-width="1" />
<line x1="1036.5" y1="529" x2="1036.5" y2="551" stroke="#b4b4b4" stroke-width="1" />
<line x1="1119.5" y1="529" x2="1119.5" y2="551" stroke="#b4b4b4" stroke-width="1" />
<line x1="1196.5" y1="529" x2="1196.5" y2="551" stroke="#b4b4b4" stroke-width="1" />
<line x1="1322.5" y1="529" x2="1322.5" y2="551" stroke="#b4b4b4" stroke-width="1" />
<rect x="1037" y="555" width="429" height="25" fill="#e6e6e6" stroke="none" stroke-width="1" />
<line x1="909.5" y1="555" x2="909.5" y2="580" stroke="#cfcfcf" stroke-width="1" />
<line x1="1036.5" y1="555" x2="1036.5" y2="580" stroke="#cfcfcf" stroke-width="1" />
<line x1="1119.5" y1="555" x2="1119.5" y2="580" stroke="#cfcfcf" stroke-width="1" />
<line x1="1196.5" y1="555" x2="1196.5" y2="580" stroke="#cfcfcf" stroke-width="1" />
<line x1="1322.5" y1="555" x2="1322.5" y2="580" stroke="#cfcfcf" stroke-width="1" />
<line x1="909.5" y1="580.5" x2="1466" y2="580.5" stroke="#d0d0d0" stroke-width="1" />
<text x="914.0" y="545.0" font-size="13" fill="#7b7b8a" text-anchor="start" font-weight="normal" >Test</text>
<text x="1041.0" y="545.0" font-size="13" fill="#7b7b8a" text-anchor="start" font-weight="normal" >Statistik</text>
<text x="1124.0" y="545.0" font-size="13" fill="#7b7b8a" text-anchor="start" font-weight="normal" >p-Wert</text>
<text x="1201.0" y="545.0" font-size="13" fill="#7b7b8a" text-anchor="start" font-weight="normal" >H&#x2080; verwerfen?</text>
<text x="1327.0" y="545.0" font-size="13" fill="#7b7b8a" text-anchor="start" font-weight="normal" >Hinweis</text>
<text x="914.0" y="572.5" font-size="13" fill="#333" text-anchor="start" font-weight="normal" >Anderson–Darling</text>
<text x="1114.0" y="572.5" font-size="13" fill="#333" text-anchor="end" font-weight="normal" >0,696798</text>
<text x="1192.0" y="572.5" font-size="13" fill="#333" text-anchor="end" font-weight="normal" >0,065</text>
<text x="1260.0" y="572.5" font-size="13" fill="#333" text-anchor="middle" font-weight="normal" >Nein</text>
<text x="1327.0" y="572.5" font-size="13" fill="#333" text-anchor="start" font-weight="normal" >H&#x2080;: Daten ~ Normal</text>
<path d="M893 562.5 L897.5 567 L893 571.5 Z" fill="#888"/>
<text x="5.5" y="800.0" font-size="13" fill="#444" text-anchor="start" font-weight="normal" >Spaltenanzahl</text>
<rect x="93.5" y="783.5" width="61" height="23" fill="#ffffff" stroke="#c2c2c2" stroke-width="1" />
<text x="131.0" y="801.0" font-size="13" fill="#333" text-anchor="end" font-weight="normal" >1</text>
<path d="M141.5 790 L148 790 L144.75 786.5 Z" fill="#666"/>
<path d="M141.5 799 L148 799 L144.75 802.5 Z" fill="#666"/>
<path d="M1355 786 C1358.5 786 1360.5 788.5 1360.5 791.5 C1360.5 794 1358.5 795.5 1357.7 798 L1352.3 798 C1351.5 795.5 1349.5 794 1349.5 791.5 C1349.5 788.5 1351.5 786 1355 786 Z" fill="#f59d36"/>
<line x1="1352.5" y1="799.5" x2="1357.5" y2="799.5" stroke="#555" stroke-width="1" />
<path d="M1352.5 801 L1357.5 801 L1355 803.5 Z" fill="#555"/>
<text x="1370.5" y="800.0" font-size="13" fill="#444" text-anchor="start" font-weight="normal" >Bemerkungen</text>
<rect x="1475.4" y="790.2" width="2" height="2" fill="#b4b4b4" stroke="none" stroke-width="1" />
<rect x="1475.4" y="795.2" width="2" height="2" fill="#b4b4b4" stroke="none" stroke-width="1" />
<rect x="1475.4" y="800.2" width="2" height="2" fill="#b4b4b4" stroke="none" stroke-width="1" />
<rect x="1470.4" y="795.2" width="2" height="2" fill="#b4b4b4" stroke="none" stroke-width="1" />
<rect x="1470.4" y="800.2" width="2" height="2" fill="#b4b4b4" stroke="none" stroke-width="1" />
<rect x="1465.4" y="800.2" width="2" height="2" fill="#b4b4b4" stroke="none" stroke-width="1" />
</svg>
</body></html>
